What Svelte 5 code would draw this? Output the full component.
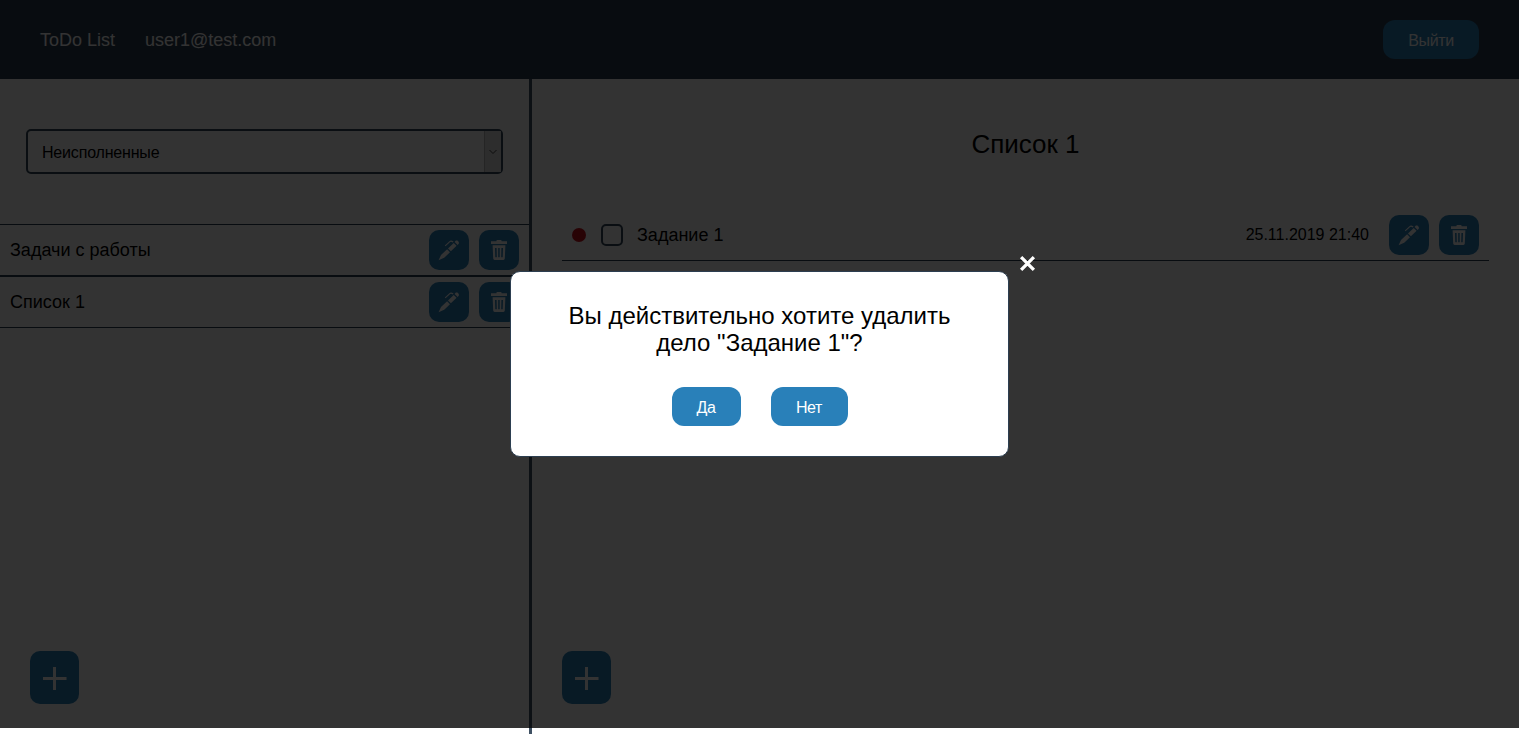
<script>
  const lists = ['Задачи с работы', 'Список 1'];
</script>

{#snippet pen()}
  <button class="tool" aria-label="Изменить">
    <svg viewBox="0 0 40 40">
      <path d="M9.6 30.2 12 24.9 18.1 19.3 21 22.2 15.2 27.8Z" />
      <path d="m19 18.4 5.7-5.5 2.9 2.9-5.7 5.5Z" />
      <path d="m25.6 12 .8-.9c1.8-1.6 4.5 1.1 3.1 3l-.9 1Z" />
      <path class="line" d="m16.2 15.9 4.6-4.3c.9-.8 1.6-.8 3.4.4" />
    </svg>
  </button>
{/snippet}

{#snippet trash()}
  <button class="tool" aria-label="Удалить">
    <svg viewBox="0 0 40 40">
      <path d="M12 11.2h5.3l.5-1.2h4.4l.5 1.2H28V14H12Z" />
      <path fill-rule="evenodd" d="M13.6 15.2h12.8l-.6 13.4q-.1 1.4-1.4 1.4h-8.8q-1.3 0-1.4-1.4ZM16 18l.3 9.3h1.5L17.6 18Zm3.2 0v9.3h1.5V18Zm3.2 0-.2 9.3h1.5L24 18Z" />
    </svg>
  </button>
{/snippet}

{#snippet add()}
  <button class="add" aria-label="Добавить">
    <svg viewBox="0 0 49 53"><path d="M13 27.5h23.5M24.5 16v23" /></svg>
  </button>
{/snippet}

<div class="page">
  <header>
    <span>ToDo List</span>
    <span class="user">user1@test.com</span>
    <button class="btn exit">Выйти</button>
  </header>
  <main>
    <aside>
      <div class="select">
        <span>Неисполненные</span>
        <i><svg viewBox="0 0 10 6"><path d="m1.5 1 3.5 3.5L8.5 1" /></svg></i>
      </div>
      <ul>
        {#each lists as name}
          <li><span>{name}</span>{@render pen()}{@render trash()}</li>
        {/each}
      </ul>
      {@render add()}
    </aside>
    <section>
      <h1>Список 1</h1>
      <div class="task">
        <i class="dot"></i>
        <i class="check"></i>
        <span class="name">Задание 1</span>
        <time>25.11.2019 21:40</time>
        {@render pen()}{@render trash()}
      </div>
      {@render add()}
    </section>
  </main>
</div>

<div class="overlay">
  <div class="modal">
    <p>Вы действительно хотите удалить дело "Задание 1"?</p>
    <div class="actions">
      <button class="btn">Да</button>
      <button class="btn no">Нет</button>
    </div>
    <svg class="close" viewBox="0 0 16 16"><path d="m2 2 12 12M14 2 2 14" /></svg>
  </div>
</div>

<style>
  :global(body) { overflow: hidden; background: #fff; }
  * { box-sizing: border-box; }
  .page { height: 734px; display: flex; flex-direction: column; font: 18px "Liberation Sans", Arial, sans-serif; color: #000; }
  header { height: 79px; flex: none; background: #2c3e50; color: #fff; display: flex; align-items: center; padding: 0 40px; }
  header span { padding-top: 2px; }
  .user { margin-left: 30px; }
  .btn { border: 0; border-radius: 12px; background: #2980b9; color: #fff; width: 69px; height: 39px; padding: 2px 0 0; font: 16px "Liberation Sans", Arial, sans-serif; letter-spacing: -0.4px; }
  .btn.no { width: 77px; }
  .exit { width: 96px; margin-left: auto; }
  main { flex: 1; display: flex; min-height: 0; }
  aside { width: 532px; flex: none; border-right: 3px solid #3f5163; padding-top: 50px; display: flex; flex-direction: column; }
  aside .add { margin: auto 0 30px 30px; }
  .select { margin: 0 26px 50px; height: 45px; border: 2px solid #34485b; border-radius: 5px; display: flex; align-items: center; padding-left: 14px; font-size: 16px; letter-spacing: -0.18px; }
  .select span { padding-top: 2px; }
  .select i { margin-left: auto; width: 17px; height: 41px; background: #e0e0e0; border-left: 1px solid #bbb; display: flex; align-items: center; justify-content: center; }
  .select svg { width: 10px; height: 6px; fill: none; stroke: #444; }
  ul { margin: 0; padding: 0; list-style: none; }
  li { height: 52px; border: solid #2c3e50; border-width: 1px 0; display: flex; align-items: center; gap: 10px; padding: 0 10px; }
  li span { margin-right: auto; }
  .tool { width: 40px; height: 40px; flex: none; padding: 0; border: 0; border-radius: 10px; background: #2980b9; }
  .tool svg { display: block; width: 40px; height: 40px; fill: #fff; }
  .tool .line { fill: none; stroke: #fff; stroke-width: 1.1; }
  .add { width: 49px; height: 53px; padding: 0; border: 0; border-radius: 10px; background: #2980b9; }
  .add svg { display: block; width: 49px; height: 53px; stroke: #fff; stroke-width: 3; }
  section { flex: 1; padding: 50px 30px 30px; display: flex; flex-direction: column; }
  section .add { margin-top: auto; }
  h1 { margin: 0 0 51px; height: 30px; font-size: 26px; line-height: 30px; font-weight: 400; text-align: center; }
  .task { height: 51px; border-bottom: 1px solid #2c3e50; display: flex; align-items: center; padding: 0 10px; }
  .dot { width: 14px; height: 14px; border-radius: 50%; background: #c8101c; }
  .check { width: 22px; height: 22px; margin: 0 14px 0 15px; border: 2px solid #34485b; border-radius: 5px; }
  time { margin: 0 20px 0 auto; font-size: 16px; }
  .task .tool + .tool { margin-left: 10px; }
  .overlay { position: absolute; top: 0; left: 0; width: 100%; height: 728px; background: rgba(0, 0, 0, 0.8); display: flex; align-items: center; justify-content: center; }
  .modal { position: relative; width: 499px; height: 186px; background: #fff; border: 1px solid #2c3e50; border-radius: 10px; padding: 30px 50px; }
  p { margin: 0 0 31px; font: 24px/27px "Liberation Sans", Arial, sans-serif; text-align: center; }
  .actions { display: flex; justify-content: center; gap: 30px; }
  .close { position: absolute; width: 17px; height: 17px; right: -28px; top: -17px; fill: none; stroke: #fff; stroke-width: 3.1; }
</style>
